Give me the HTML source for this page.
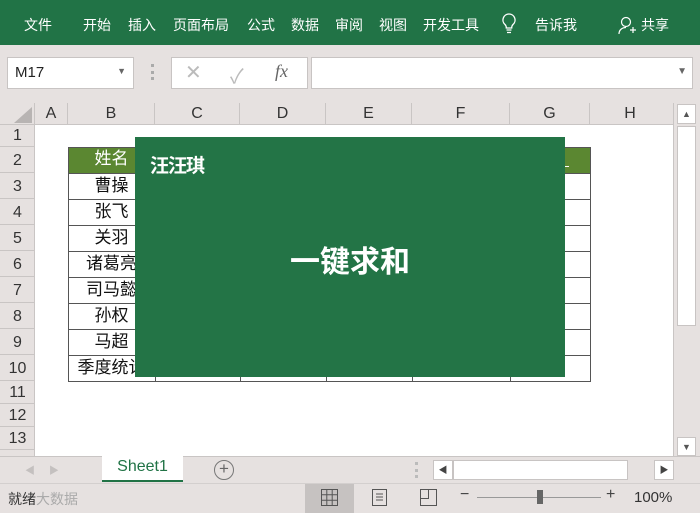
<!DOCTYPE html>
<html><head><meta charset="utf-8"><style>
*{margin:0;padding:0;box-sizing:border-box}
body{width:700px;height:513px;overflow:hidden;background:#e6e1e0;font-family:"Liberation Sans","Noto Sans CJK SC",sans-serif;position:relative}
.abs{position:absolute}
#rib{left:0;top:0;width:700px;height:45px;background:#217346;color:#fff;font-size:14px}
#rib span{position:absolute;top:15px}
.box{background:#fff;border:1px solid #c8c4c3}
.ch{top:103px;height:21px;font-size:16px;color:#333;text-align:center;line-height:21px;border-right:1px solid #c9c5c4;font-family:"Liberation Sans Narrow","Liberation Sans",sans-serif}
.rh{left:0;width:35px;font-size:16px;color:#333;text-align:center;border-bottom:1px solid #c9c5c4;font-family:"Liberation Sans Narrow","Liberation Sans",sans-serif}
.cell{position:absolute;left:68px;width:87px;height:26px;line-height:26px;font-size:17px;text-align:center;color:#111;white-space:nowrap}
</style></head><body>
<div id="rib" class="abs">
<span style="left:24px">文件</span><span style="left:83px">开始</span><span style="left:128px">插入</span><span style="left:173px">页面布局</span><span style="left:247px">公式</span><span style="left:291px">数据</span><span style="left:335px">审阅</span><span style="left:379px">视图</span><span style="left:423px">开发工具</span>
<svg class="abs" style="left:501px;top:13px" width="16" height="22" viewBox="0 0 16 22"><path d="M8 1a6 6 0 0 0-4 10.5c1 1 1.3 2 1.3 3.5h5.4c0-1.5.3-2.5 1.3-3.5A6 6 0 0 0 8 1zM5.5 17h5M6 19.5h4" stroke="#fff" stroke-width="1.3" fill="none"/></svg>
<span style="left:535px">告诉我</span>
<svg class="abs" style="left:618px;top:16px" width="20" height="20" viewBox="0 0 20 20"><circle cx="8" cy="6" r="4.5" stroke="#fff" stroke-width="1.2" fill="none"/><path d="M1 18c0-4 3-6.5 7-6.5M12 14h6M15 11v6" stroke="#fff" stroke-width="1.2" fill="none"/></svg>
<span style="left:641px">共享</span>
</div>
<div class="abs box" style="left:7px;top:57px;width:127px;height:32px;font-size:15px;padding:6px 7px;color:#222">M17<span style="position:absolute;right:7px;top:8px;font-size:9px;color:#666">▼</span></div>
<div class="abs" style="left:151px;top:64px;width:3px;height:16px;border-left:3px dotted #aaa"></div>
<div class="abs box" style="left:171px;top:57px;width:137px;height:32px;color:#bbb;font-size:20px"><span class="abs" style="left:13px;top:2px">✕</span><span class="abs" style="left:58px;top:2px">✓</span><span class="abs" style="left:103px;top:3px;color:#666;font-family:'Liberation Serif',serif;font-style:italic;font-size:18px">fx</span></div>
<div class="abs box" style="left:311px;top:57px;width:382px;height:32px"><span class="abs" style="right:5px;top:8px;font-size:10px;color:#666">▼</span></div>
<div class="abs" style="left:35px;top:124px;width:638px;height:332px;background:#fff"></div>
<svg class="abs" style="left:14px;top:107px" width="18" height="16"><path d="M18 0V16H0Z" fill="#b8b4b3"/></svg>
<div class="abs" style="left:0;top:103px;width:35px;height:21px;border-right:1px solid #c9c5c4"></div>
<div class="abs ch" style="left:35px;width:33px">A</div>
<div class="abs ch" style="left:68px;width:87px">B</div>
<div class="abs ch" style="left:155px;width:85px">C</div>
<div class="abs ch" style="left:240px;width:86px">D</div>
<div class="abs ch" style="left:326px;width:86px">E</div>
<div class="abs ch" style="left:412px;width:98px">F</div>
<div class="abs ch" style="left:510px;width:80px">G</div>
<div class="abs ch" style="left:590px;width:80px;border:none">H</div>
<div class="abs" style="left:0;top:124px;width:673px;border-top:1px solid #c9c5c4"></div>
<div class="abs" style="left:34px;top:124px;height:332px;border-right:1px solid #c9c5c4"></div>
<div class="abs rh" style="top:124px;height:23px;line-height:23px">1</div>
<div class="abs rh" style="top:147px;height:26px;line-height:28px">2</div>
<div class="abs rh" style="top:173px;height:26px;line-height:28px">3</div>
<div class="abs rh" style="top:199px;height:26px;line-height:28px">4</div>
<div class="abs rh" style="top:225px;height:26px;line-height:28px">5</div>
<div class="abs rh" style="top:251px;height:26px;line-height:28px">6</div>
<div class="abs rh" style="top:277px;height:26px;line-height:28px">7</div>
<div class="abs rh" style="top:303px;height:26px;line-height:28px">8</div>
<div class="abs rh" style="top:329px;height:26px;line-height:28px">9</div>
<div class="abs rh" style="top:355px;height:26px;line-height:28px">10</div>
<div class="abs rh" style="top:381px;height:23px;line-height:24px">11</div>
<div class="abs rh" style="top:404px;height:23px;line-height:24px">12</div>
<div class="abs rh" style="top:427px;height:23px;line-height:24px">13</div>
<div class="abs" style="left:68px;top:147px;width:522px;height:26px;background:#5b8731"></div>
<svg class="abs" style="left:67px;top:146px" width="525" height="237"><g stroke="#555" stroke-width="1" fill="none"><rect x="1.5" y="1.5" width="522" height="234"/><path d="M1 27.5H523M1 53.5H523M1 79.5H523M1 105.5H523M1 131.5H523M1 157.5H523M1 183.5H523M1 209.5H523"/><path d="M88.5 27V236M173.5 209V236M259.5 209V236M345.5 209V236M443.5 27V236"/></g></svg>
<div class="cell" style="top:147px;color:#fff;line-height:24px">姓名</div>
<div class="cell" style="top:173px">曹操</div>
<div class="cell" style="top:199px">张飞</div>
<div class="cell" style="top:225px">关羽</div>
<div class="cell" style="top:251px">诸葛亮</div>
<div class="cell" style="top:277px">司马懿</div>
<div class="cell" style="top:303px">孙权</div>
<div class="cell" style="top:329px">马超</div>
<div class="cell" style="top:355px">季度统计</div>
<div class="abs" style="left:135px;top:137px;width:430px;height:240px;background:#237446"></div>
<div class="abs" style="left:150px;top:151px;color:#fff;font-size:19px;font-weight:bold;letter-spacing:-1px">汪汪琪</div>
<div class="abs" style="left:135px;top:237px;width:430px;text-align:center;color:#fff;font-size:30px;font-weight:bold">一键求和</div>
<div class="abs" style="left:565px;top:153px;width:4px;height:14px;border-bottom:1px solid #fff"></div>
<div class="abs" style="left:673px;top:103px;width:27px;height:353px;background:#e6e1e0;border-left:1px solid #c9c5c4"></div>
<div class="abs box" style="left:677px;top:104px;width:19px;height:20px;font-size:9px;color:#555;text-align:center;line-height:18px">▲</div>
<div class="abs box" style="left:677px;top:126px;width:19px;height:200px"></div>
<div class="abs box" style="left:677px;top:437px;width:19px;height:19px;font-size:9px;color:#555;text-align:center;line-height:18px">▼</div>
<div class="abs" style="left:0;top:456px;width:700px;border-top:1px solid #c9c5c4"></div>
<div class="abs" style="left:25px;top:462px;color:#c4c0bf;font-size:10px">◀&nbsp;&nbsp;&nbsp;&nbsp;&nbsp;▶</div>
<div class="abs" style="left:102px;top:456px;width:81px;height:26px;background:#fff;border-bottom:2px solid #217346;color:#217346;font-size:16px;text-align:center;line-height:22px">Sheet1</div>
<div class="abs" style="left:214px;top:460px;width:20px;height:20px;border:1.5px solid #777;border-radius:50%;text-align:center;line-height:16px;color:#666;font-size:17px">+</div>
<div class="abs" style="left:415px;top:462px;height:16px;border-left:3px dotted #bbb"></div>
<div class="abs box" style="left:433px;top:460px;width:20px;height:20px;font-size:9px;color:#444;text-align:center;line-height:18px">◀</div>
<div class="abs box" style="left:453px;top:460px;width:175px;height:20px"></div>
<div class="abs box" style="left:654px;top:460px;width:20px;height:20px;font-size:9px;color:#444;text-align:center;line-height:18px">▶</div>
<div class="abs" style="left:0;top:483px;width:700px;border-top:1px solid #d3cfce"></div>
<div class="abs" style="left:8px;top:489px;font-size:14px;color:#333">就绪<span style="color:#aaa">大数据</span></div>
<div class="abs" style="left:305px;top:484px;width:49px;height:29px;background:#c6c2c1"></div>
<svg class="abs" style="left:320px;top:488px" width="20" height="20"><path d="M1.5 1.5h16v16h-16zM1.5 6.8h16M1.5 12.2h16M6.8 1.5v16M12.2 1.5v16" stroke="#555" fill="none"/></svg>
<svg class="abs" style="left:370px;top:488px" width="20" height="20"><path d="M2.5 1.5h14v16h-14zM6 6h7M6 9h7M6 12h7" stroke="#555" fill="none"/></svg>
<svg class="abs" style="left:419px;top:488px" width="20" height="20"><path d="M1.5 1.5h16v16h-16zM9.5 1.5v9h-8" stroke="#555" fill="none"/></svg>
<div class="abs" style="left:460px;top:486px;font-size:16px;color:#444">−</div>
<div class="abs" style="left:477px;top:497px;width:124px;border-top:1px solid #999"></div>
<div class="abs" style="left:537px;top:490px;width:6px;height:14px;background:#666"></div>
<div class="abs" style="left:606px;top:486px;font-size:16px;color:#444">+</div>
<div class="abs" style="left:634px;top:489px;font-size:15px;color:#333">100%</div>
</body></html>
